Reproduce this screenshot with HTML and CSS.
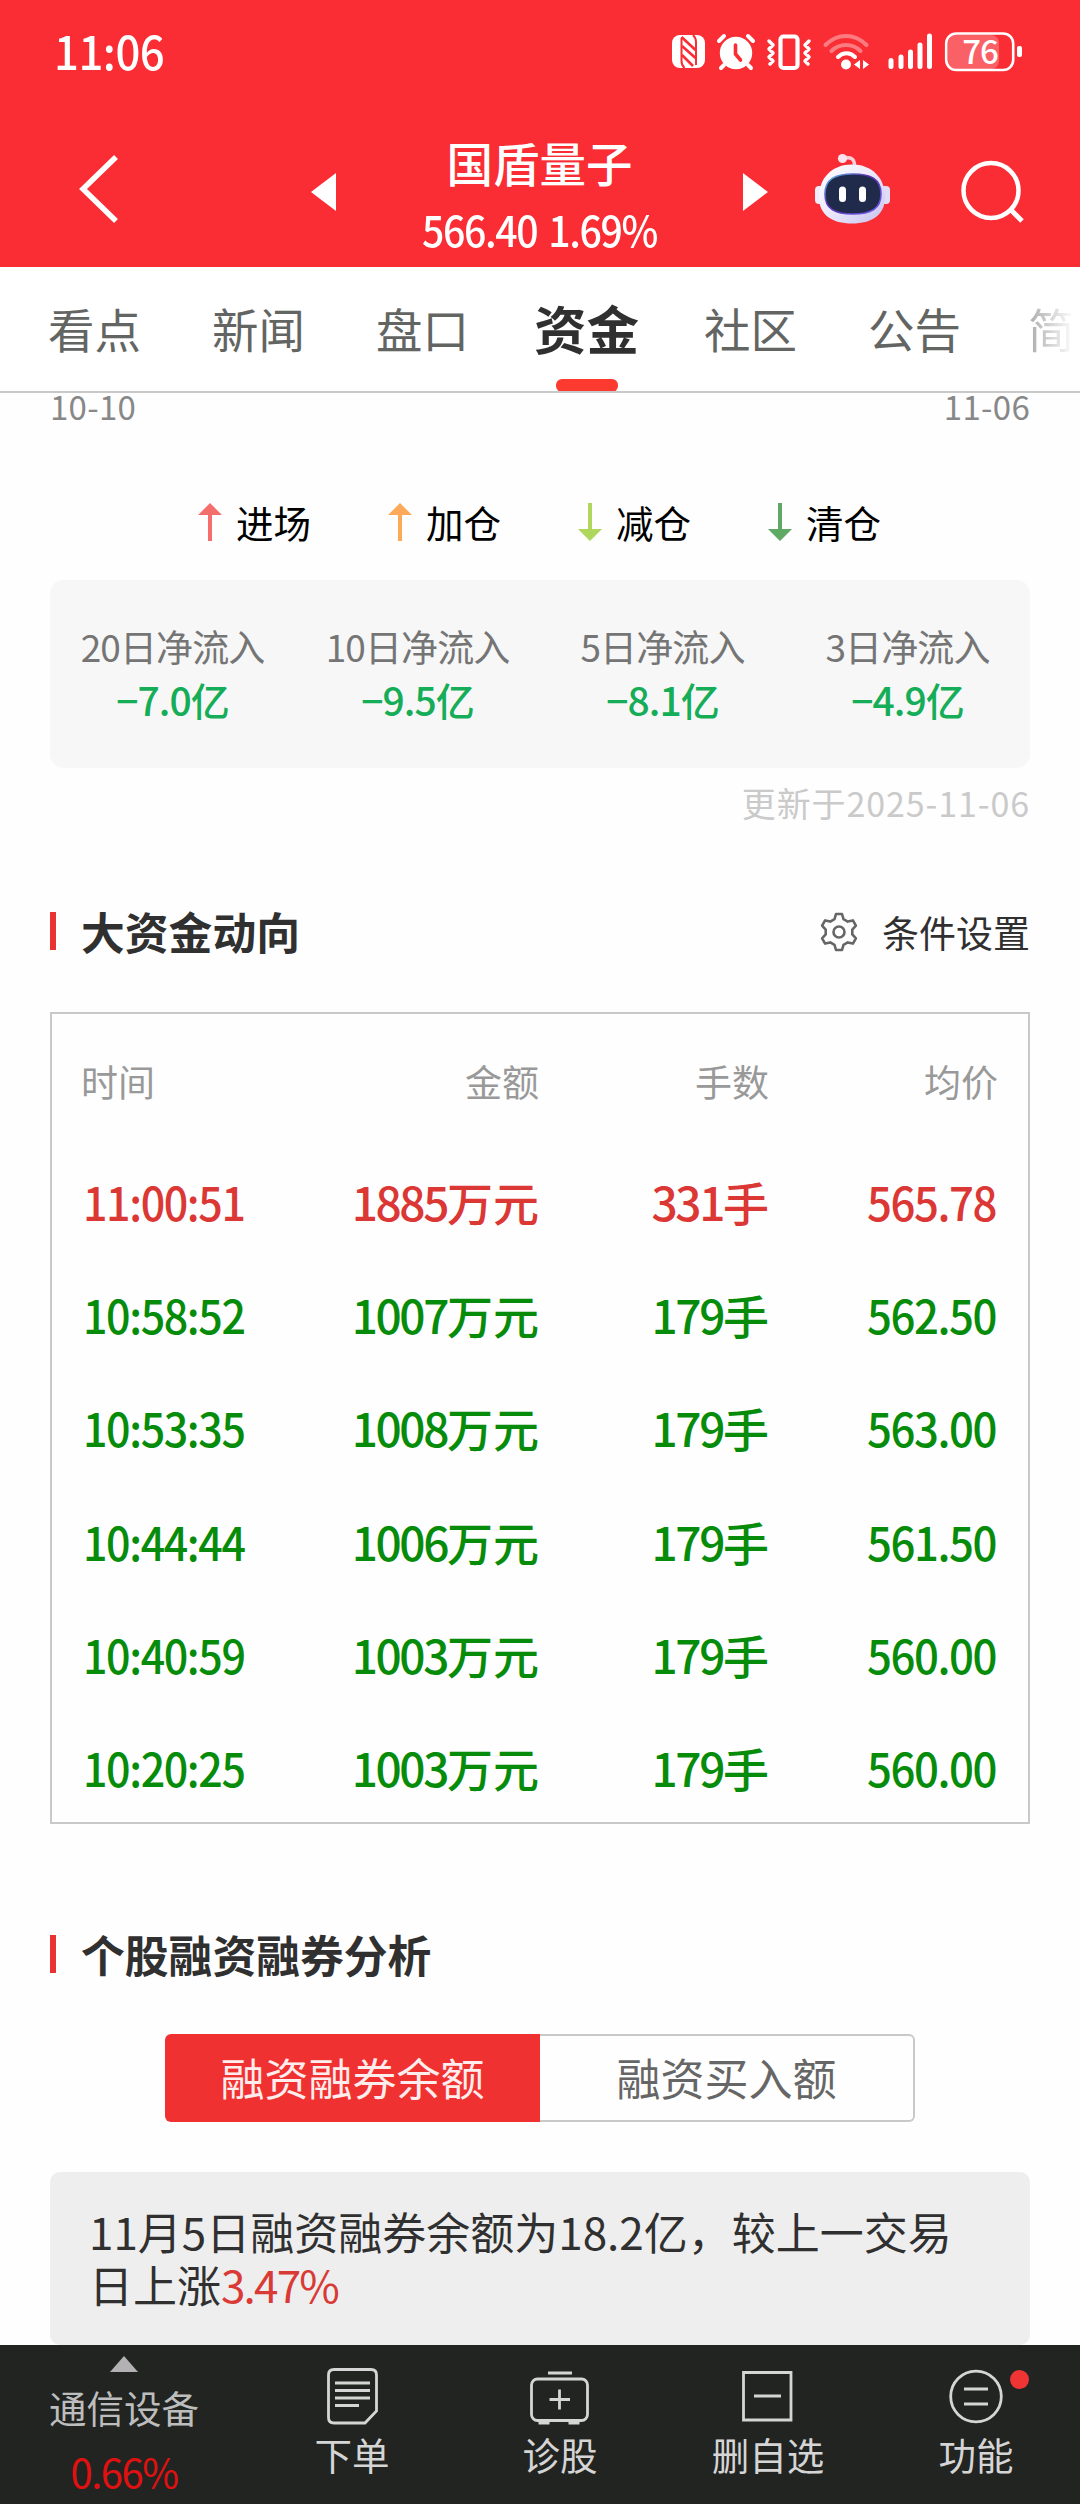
FILE: index.html
```html
<!DOCTYPE html>
<html lang="zh-CN">
<head>
<meta charset="utf-8">
<title>国盾量子</title>
<link rel="stylesheet" href="styles.css">
</head>
<body>
<header class="header">
  <div class="status">
    <span class="clock">11:06</span>
    <svg class="status-icons" width="352" height="44" viewBox="672 30 352 44" fill="#fff">
      <rect x="672" y="35" width="33" height="33" rx="8"/>
      <path d="M681.500 38V61c0 3 1 5 3 7M696 65V42c0-3-1-5-3-7" fill="none" stroke="#f92d33" stroke-width="2"/>
      <path d="M681.500 37L695.500 50M682 46L695.500 58M682 55L693 66" stroke="#f92d33" stroke-width="2.600" fill="none"/>
      <circle cx="736" cy="53" r="16.200"/>
      <path d="M719 41l5-5M753 41l-5-5M724 65l-3 3M748 65l3 3" stroke="#fff" stroke-width="4" stroke-linecap="round"/>
      <path d="M735.500 45v9l5 6" stroke="#f92d33" stroke-width="3.600" stroke-linecap="round" fill="none"/>
      <rect x="780.500" y="36.500" width="17" height="31.500" rx="3" fill="none" stroke="#fff" stroke-width="4.200"/>
      <path d="M769 41l4 4-4 4 4 4-4 4 4 4-3 3M809 41l-4 4 4 4-4 4 4 4-4 4 3 3" fill="none" stroke="#fff" stroke-width="3.500" stroke-linejoin="round" stroke-linecap="round"/>
      <g fill="none" stroke-width="4" stroke-linecap="round" stroke="#fff">
        <path d="M825.500 45c12-12 29-12 41 0M831.500 51c8-8 21-8 29 0" opacity=".38"/>
        <path d="M838 57c5-5 12-5 17 0"/>
      </g>
      <circle cx="846" cy="64.500" r="5"/>
      <path d="M860 60v9l-6-4.500zM863 60v9l6-4.500z"/>
      <path d="M891 60.500v6M901 57v9.500M910.500 52v14.500M920 45v21.500M929.500 36v30.500" stroke="#fff" stroke-width="5" stroke-linecap="round"/>
      <rect x="948" y="35" width="51" height="34" rx="8" fill="#fff" opacity=".25"/>
      <rect x="946.200" y="33.500" width="67" height="36.500" rx="10" fill="none" stroke="#fff" stroke-width="2.600"/>
      <rect x="1017" y="46" width="5" height="11" rx="2"/>
      <text class="battery" x="980" y="64" text-anchor="middle">76</text>
    </svg>
  </div>
  <div class="nav">
    <svg class="back" width="44" height="72" viewBox="0 0 44 72"><path d="M39 4L6 36l33 32" fill="none" stroke="#fff" stroke-width="5.500"/></svg>
    <svg class="prev" width="25" height="38" viewBox="0 0 25 38"><path d="M25 0v38L0 19z" fill="#fff"/></svg>
    <div class="stock"><div class="name">国盾量子</div><div class="quote">566.40 1.69%</div></div>
    <svg class="next" width="25" height="38" viewBox="0 0 25 38"><path d="M0 0v38l25-19z" fill="#fff"/></svg>
    <svg class="robot" width="76" height="72" viewBox="814 153 76 72">
      <defs>
        <linearGradient id="shell" x1="0" y1="0" x2="1" y2="1"><stop offset="0" stop-color="#fff"/><stop offset=".5" stop-color="#ece8fb"/><stop offset="1" stop-color="#c4c1ee"/></linearGradient>
        <linearGradient id="rim" x1="0" y1="0" x2="1" y2="1"><stop offset="0" stop-color="#58c4e8"/><stop offset=".4" stop-color="#5a2fb0"/><stop offset="1" stop-color="#7060f0"/></linearGradient>
      </defs>
      <path d="M843 159c8-3 12 0 11.500 8" fill="none" stroke="#f6cfdc" stroke-width="3.500"/>
      <circle cx="842.500" cy="158.500" r="4.600" fill="#f9e3ee"/>
      <rect x="815" y="186" width="14" height="18" rx="4" fill="#f0ecfb"/><rect x="876" y="186" width="14" height="18" rx="4" fill="#e0dcf8"/>
      <path d="M852 164.500C872 164.500 885 178 885 197C885 215 872 223.500 852 223.500S819 215 819 197C819 178 832 164.500 852 164.500z" fill="url(#shell)"/>
      <path d="M853 174C871 174 881 179 881 194C881 209 871 214 853 214S825 209 825 194C825 179 835 174 853 174z" fill="#202b4c" stroke="url(#rim)" stroke-width="1.600"/>
      <rect x="839" y="186.500" width="7" height="15.500" rx="3.500" fill="#fff"/><rect x="859" y="186.500" width="7" height="15.500" rx="3.500" fill="#fff"/>
    </svg>
    <svg class="search" width="66" height="66" viewBox="0 0 66 66" fill="none" stroke="#fff" stroke-width="4.500"><circle cx="31" cy="32.500" r="27.500"/><path d="M51 52l11 11" stroke-width="5"/></svg>
  </div>
</header>
<nav class="tabs">
  <span class="tab">看点</span><span class="tab">新闻</span><span class="tab">盘口</span><span class="tab active">资金</span><span class="tab">社区</span><span class="tab">公告</span><span class="tab fading">简</span>
</nav>
<main class="content">
  <div class="axis"><span>10-10</span><span>11-06</span></div>
  <div class="legend">
    <span class="key enter"><svg width="24" height="38" viewBox="0 0 24 38"><path d="M12 0l12 12H14v26h-4V12H0z"/></svg>进场</span>
    <span class="key add"><svg width="24" height="38" viewBox="0 0 24 38"><path d="M12 0l12 12H14v26h-4V12H0z"/></svg>加仓</span>
    <span class="key cut"><svg width="24" height="38" viewBox="0 0 24 38"><path d="M12 38l12-12H14V0h-4v26H0z"/></svg>减仓</span>
    <span class="key clear"><svg width="24" height="38" viewBox="0 0 24 38"><path d="M12 38l12-12H14V0h-4v26H0z"/></svg>清仓</span>
  </div>
  <div class="flows">
    <div class="flow"><span class="label">20日净流入</span><span class="value">−7.0亿</span></div>
    <div class="flow"><span class="label">10日净流入</span><span class="value">−9.5亿</span></div>
    <div class="flow"><span class="label">5日净流入</span><span class="value">−8.1亿</span></div>
    <div class="flow"><span class="label">3日净流入</span><span class="value">−4.9亿</span></div>
  </div>
  <div class="updated">更新于2025-11-06</div>
  <div class="section-head">
    <h2>大资金动向</h2>
    <span class="settings">
      <svg width="40" height="40" viewBox="0 0 40 40" fill="none" stroke="#666" stroke-width="2.600" stroke-linejoin="round"><path d="M17 2h6l1.500 5.200 4.200 2.400 5.200-1.200 3 5.200-3.600 4v4.800l3.600 4-3 5.200-5.200-1.200-4.200 2.400L23 38h-6l-1.500-5.200-4.200-2.400-5.200 1.200-3-5.200 3.600-4v-4.800l-3.600-4 3-5.200 5.200 1.200 4.200-2.400z"/><circle cx="20" cy="20" r="5.500"/></svg>
      条件设置</span>
  </div>
  <div class="table">
    <div class="row head"><span>时间</span><span>金额</span><span>手数</span><span>均价</span></div>
    <div class="row up"><span>11:00:51</span><span>1885<b>万元</b></span><span>331<b>手</b></span><span>565.78</span></div>
    <div class="row down"><span>10:58:52</span><span>1007<b>万元</b></span><span>179<b>手</b></span><span>562.50</span></div>
    <div class="row down"><span>10:53:35</span><span>1008<b>万元</b></span><span>179<b>手</b></span><span>563.00</span></div>
    <div class="row down"><span>10:44:44</span><span>1006<b>万元</b></span><span>179<b>手</b></span><span>561.50</span></div>
    <div class="row down"><span>10:40:59</span><span>1003<b>万元</b></span><span>179<b>手</b></span><span>560.00</span></div>
    <div class="row down"><span>10:20:25</span><span>1003<b>万元</b></span><span>179<b>手</b></span><span>560.00</span></div>
  </div>
  <div class="section-head second"><h2>个股融资融券分析</h2></div>
  <div class="switch"><span class="on">融资融券余额</span><span class="off">融资买入额</span></div>
  <div class="note">11月5日融资融券余额为18.2亿，较上一交易日上涨<em>3.47%</em></div>
</main>
<footer class="bar">
  <div class="sector"><svg width="28" height="16" viewBox="0 0 28 16"><path d="M14 0l14 16H0z" fill="#b3b1b3"/></svg><span class="sector-name">通信设备</span><span class="sector-pct">0.66%</span></div>
  <div class="action">
    <svg width="76" height="60" viewBox="314 2366 76 60" fill="none" stroke="#d6d5d6" stroke-width="2.800"><path d="M334 2369.500h37q5.500 0 5.500 5.500v36l-11.500 12h-31q-5.500 0-5.500-5.500V2375q0-5.500 5.500-5.500zM335 2383h35M335 2390.500h35M335 2398h35M335 2405.500h24"/></svg>
    <span>下单</span></div>
  <div class="action">
    <svg width="76" height="60" viewBox="522 2366 76 60" fill="none" stroke="#d6d5d6" stroke-width="2.800"><rect x="531.500" y="2379" width="56" height="41.500" rx="6"/><path d="M548 2373h24M559.500 2389.500v20M549.500 2399.500h20.500"/><path d="M538.500 2422.500h11M568.500 2422.500h11" stroke-width="4"/></svg>
    <span>诊股</span></div>
  <div class="action">
    <svg width="76" height="60" viewBox="730 2366 76 60" fill="none" stroke="#d6d5d6" stroke-width="2.800"><path d="M743.500 2372.500h47.500v47.500h-47.500zM754 2396h27"/></svg>
    <span>删自选</span></div>
  <div class="action">
    <svg width="76" height="60" viewBox="937 2366 76 60" fill="none" stroke="#d6d5d6" stroke-width="2.800"><circle cx="975" cy="2396.500" r="25.300"/><path d="M963 2389h24M963 2404h24"/></svg>
    <span>功能</span><i class="dot"></i></div>
</footer>
</body>
</html>
```
FILE: styles.css
```css
* { box-sizing: border-box; }
body {
  margin: 0;
  width: 1080px;
  height: 2504px;
  overflow: hidden;
  display: flex;
  flex-direction: column;
  background: #fefefe;
  color: #333;
  font-family: "Noto Sans CJK SC", sans-serif;
}
svg { display: block; flex: none; }

.header { height: 267px; background: #f92d33; color: #fff; }
.status { height: 104px; display: flex; justify-content: space-between; align-items: center; padding: 0 56px 0 54px; }
.clock { font-size: 46px; font-weight: 500; line-height: 60px; letter-spacing: -.5px; margin-top: -4px; transform: scaleX(.95); transform-origin: left; }
.status-icons { overflow: visible; }
.battery { font-size: 33px; font-weight: 500; letter-spacing: -1px; }
.nav { height: 163px; display: flex; align-items: flex-start; }
.back { margin: 49px 0 0 77px; }
.prev { margin: 69px 0 0 190px; }
.stock { width: 407px; padding-top: 27px; text-align: center; }
.name { font-size: 46.500px; font-weight: 500; line-height: 62px; }
.quote { font-size: 42px; font-weight: 500; line-height: 60px; letter-spacing: -1.500px; word-spacing: 4px; padding-top: 6px; white-space: nowrap; transform: scaleX(.935); }
.next { margin-top: 69px; }
.robot { margin: 49px 0 0 46px; }
.search { margin: 54px 0 0 70px; }

.tabs { height: 126px; flex: none; display: flex; gap: 72px; padding-left: 48px; border-bottom: 2px solid #c9c9c9; overflow: hidden; background: #fff; }
.tab { width: 93px; margin-right: -1px; flex: none; display: flex; justify-content: center; font-size: 46.500px; line-height: 121px; color: #636563; white-space: nowrap; }
.tab.active { position: relative; font-size: 52.500px; font-weight: 700; color: #303030; line-height: 120px; }
.tab.active::after { content: ""; position: absolute; left: 16px; bottom: -1px; width: 62px; height: 13px; border-radius: 6px; background: #fd3a30; }
.tab.fading { width: 48px; margin-left: -4px; color: transparent; background: linear-gradient(90deg, #aaa, #fff 46px); -webkit-background-clip: text; background-clip: text; justify-content: flex-start; }

.content { flex: none; height: 1952px; padding: 0 50px; overflow: hidden; }
.axis { display: flex; justify-content: space-between; height: 110px; font-size: 33px; line-height: 27px; color: #888; letter-spacing: .3px; }
.legend { display: flex; height: 77px; padding-left: 148px; }
.key { width: 190px; height: 38px; display: flex; align-items: center; gap: 14px; font-size: 37.500px; line-height: 36px; color: #000; }
.enter svg { fill: #f46e6c; } .add svg { fill: #fda95a; } .cut svg { fill: #afd75e; } .clear svg { fill: #5fa964; }
.flows { height: 188px; border-radius: 14px; background: #f7f7f7; display: grid; grid-template-columns: repeat(4, 1fr); padding-top: 39px; }
.flow { display: flex; flex-direction: column; align-items: center; }
.label { font-size: 37px; line-height: 54px; color: #757575; letter-spacing: -.9px; }
.value { font-size: 39px; line-height: 52px; font-weight: 500; color: #15ad57; letter-spacing: -1px; }
.updated { height: 144px; padding-top: 10px; text-align: right; font-size: 34px; line-height: 50px; color: #cacaca; letter-spacing: .9px; }

.section-head { height: 100px; display: flex; justify-content: space-between; align-items: flex-start; }
.section-head h2 { margin: 0; border-left: 6px solid #e93333; padding-left: 25px; font-size: 43.800px; line-height: 38px; font-weight: 700; color: #303030; }
.settings { display: flex; align-items: center; gap: 23px; font-size: 37px; line-height: 40px; color: #303030; }

.table { height: 812px; border: 2px solid #c9c9c9; padding: 9px 30px 0 29px; }
.row { display: grid; grid-template-columns: 190px 268px 230px 1fr; align-items: center; height: 113.200px; text-align: right; font-size: 46px; font-weight: 500; letter-spacing: -2.400px; white-space: nowrap; }
.row span:first-child { text-align: left; }
.row:not(.head) span:first-child { letter-spacing: -1.500px; transform: translateX(2px) scaleX(.935); transform-origin: left; }
.row:not(.head) span:last-child { letter-spacing: -1.500px; transform: translateX(-2px) scaleX(.95); transform-origin: right; }
.row b { font-weight: 500; letter-spacing: 0; }
.row.head { height: 121.500px; padding-bottom: 6px; font-size: 37px; font-weight: 400; color: #999; letter-spacing: 0; }
.up { color: #db3735; }
.down { color: #068c0a; }

.second { margin-top: 111px; height: 99px; }
.switch { width: 750px; height: 88px; margin: 0 auto 50px 115px; display: flex; font-size: 44px; line-height: 86px; text-align: center; }
.on { width: 375px; background: #ef3131; color: #ffecec; border-radius: 6px 0 0 6px; }
.off { width: 375px; border: 2px solid #c9c9c9; border-left: 0; border-radius: 0 6px 6px 0; color: #666; line-height: 82px; }
.note { height: 173px; border-radius: 10px; background: #eee; padding: 33px 41px 0 39px; font-size: 44px; line-height: 53px; color: #303030; }
.note em { font-style: normal; color: #d93a36; letter-spacing: -1.800px; }

.bar { flex: none; height: 159px; display: flex; background: #212421; color: #d6d5d6; font-size: 37.500px; }
.sector { width: 248px; display: flex; flex-direction: column; align-items: center; padding-top: 11px; }
.sector-name { line-height: 50px; margin-top: 10px; color: #bcbdbc; }
.sector-pct { line-height: 50px; margin-top: 14px; font-size: 40px; letter-spacing: -1.500px; color: #e01111; }
.action { position: relative; width: 208px; display: flex; flex-direction: column; align-items: center; padding-top: 21px; }
.action span { line-height: 50px; margin-top: 3px; }
.dot { position: absolute; left: 138px; top: 25px; width: 19px; height: 19px; border-radius: 50%; background: #ef3434; }
```
